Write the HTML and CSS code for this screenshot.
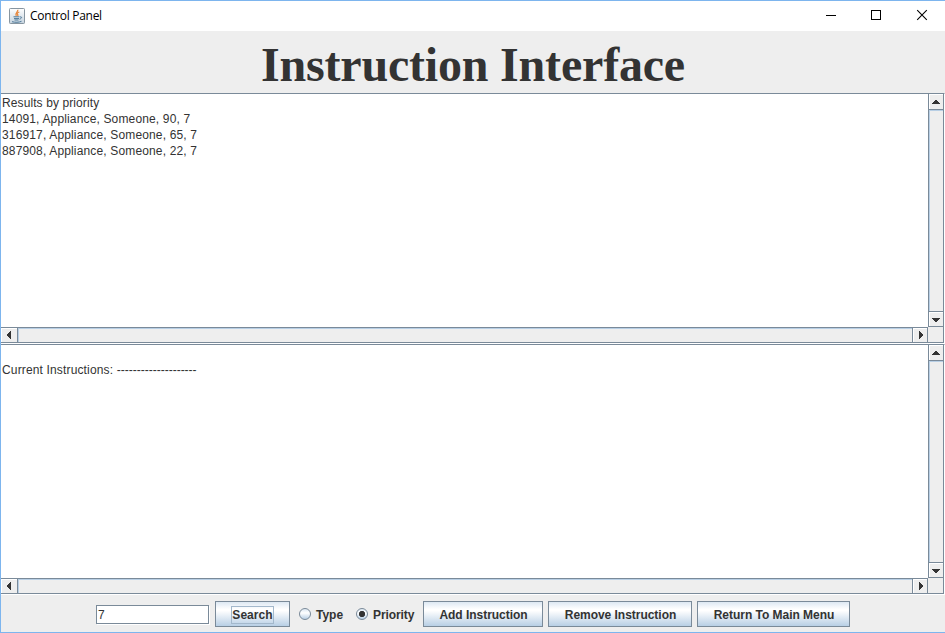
FILE: index.html
```html
<!DOCTYPE html>
<html lang="en">
<head>
<meta charset="utf-8">
<title>Control Panel</title>
<link rel="stylesheet" href="styles.css">
</head>
<body>
<div class="window">
  <header class="titlebar">
    <svg class="app-icon" width="16" height="16" viewBox="0 0 16 16">
      <defs><linearGradient id="tile" x2="0" y2="1"><stop offset="0" stop-color="#fff"/><stop offset="1" stop-color="#c5d3df"/></linearGradient></defs>
      <rect x=".5" y=".5" width="15" height="15" rx=".8" fill="url(#tile)" stroke="#8795a0"/>
      <path d="M8.700 1.800C9.700 4 5.200 4.700 7.300 8.200M10.300 4C7.500 5 8 6 8.800 6.800V8" fill="none" stroke="#e8883d" stroke-width="1.300"/>
      <path d="M4.500 8.800h6M5 10.600h5M5.500 12h4M3 13.700c3 .8 7 .8 9.500-.4M11 9c2-.7 2.400 1.300-.5 2.200" fill="none" stroke="#4e7898" stroke-width="1"/>
    </svg>
    <span class="caption">Control Panel</span>
    <svg class="controls" width="119" height="30" viewBox="0 0 119 30" fill="none" stroke="#000">
      <path d="M0 14.500h10M45.500 9.500h9v9h-9z" shape-rendering="crispEdges"/>
      <path d="M91.200 9.200l9.600 9.600M100.800 9.200l-9.600 9.600" stroke-width="1.100"/>
    </svg>
  </header>
  <h1 class="heading">Instruction Interface</h1>

  <section class="pane">
    <div class="view"><span class="title-line">Results by priority</span>
14091, Appliance, Someone, 90, 7
316917, Appliance, Someone, 65, 7
887908, Appliance, Someone, 22, 7</div>
    <div class="vbar">
      <div class="step"><svg width="8" height="4" viewBox="0 0 8 4"><path d="M3 0h2v1h1v1h1v1h1v1H0V3h1V2h1V1h1z"/></svg></div>
      <div class="track"></div>
      <div class="step"><svg width="8" height="4" viewBox="0 0 8 4"><path d="M0 0h8v1H7v1H6v1H5v1H3V3H2V2H1V1H0z"/></svg></div>
    </div>
    <div class="hbar">
      <div class="step"><svg width="4" height="8" viewBox="0 0 4 8"><path d="M4 0v8H3V7H2V6H1V5H0V3h1V2h1V1h1V0z"/></svg></div>
      <div class="track"></div>
      <div class="step"><svg width="4" height="8" viewBox="0 0 4 8"><path d="M0 0v8h1V7h1V6h1V5h1V3H3V2H2V1H1V0z"/></svg></div>
    </div>
    <div class="corner"></div>
  </section>

  <section class="pane">
    <div class="view"><br>Current Instructions: <span class="dashes">--------------------</span></div>
    <div class="vbar">
      <div class="step"><svg width="8" height="4" viewBox="0 0 8 4"><path d="M3 0h2v1h1v1h1v1h1v1H0V3h1V2h1V1h1z"/></svg></div>
      <div class="track"></div>
      <div class="step"><svg width="8" height="4" viewBox="0 0 8 4"><path d="M0 0h8v1H7v1H6v1H5v1H3V3H2V2H1V1H0z"/></svg></div>
    </div>
    <div class="hbar">
      <div class="step"><svg width="4" height="8" viewBox="0 0 4 8"><path d="M4 0v8H3V7H2V6H1V5H0V3h1V2h1V1h1V0z"/></svg></div>
      <div class="track"></div>
      <div class="step"><svg width="4" height="8" viewBox="0 0 4 8"><path d="M0 0v8h1V7h1V6h1V5h1V3H3V2H2V1H1V0z"/></svg></div>
    </div>
    <div class="corner"></div>
  </section>

  <footer class="toolbar">
    <div class="field">7</div>
    <button class="btn search"><span class="focus">Search</span></button>
    <div class="radio type"><i class="dot"></i><span>Type</span></div>
    <div class="radio priority"><i class="dot on"></i><span>Priority</span></div>
    <button class="btn add">Add Instruction</button>
    <button class="btn remove">Remove Instruction</button>
    <button class="btn return">Return To Main Menu</button>
  </footer>
</div>
</body>
</html>
```
FILE: styles.css
```css
* { box-sizing: border-box; }
body { margin: 0; overflow: hidden; font: 12px "Liberation Sans", Arial, sans-serif; color: #333; }
.window {
  width: 945px; height: 633px; background: #eee;
  border: 1px solid #7db5ee; border-right: 0;
  display: flex; flex-direction: column;
}
.titlebar { height: 30px; background: #fff; display: flex; align-items: center; padding-left: 8px; flex: none; }
.app-icon { margin-top: -1px; }
.caption { margin-left: 5px; font: 12px/16px "Open Sans", "Noto Sans", sans-serif; color: #000; letter-spacing: -.3px; }
.controls { margin-left: auto; }
.heading {
  margin: 0; height: 62px; flex: none; text-align: center; white-space: nowrap;
  font: bold 48px/68px "Liberation Serif", "Times New Roman", serif; letter-spacing: -.19px;
}
.pane {
  height: 251px; flex: none; display: grid;
  grid-template-columns: 927px 16px; grid-template-rows: 233px 16px;
  border-top: 1px solid #7a8a99; border-bottom: 1px solid #fff; border-right: 1px solid #fff;
}
.view { background: #fff; padding: 1px 0 0 1px; line-height: 16px; white-space: pre; letter-spacing: .15px; }
.title-line { letter-spacing: .1px; }
.dashes { letter-spacing: 0; }
.vbar { border: solid #7a8a99; border-width: 0 1px 1px; display: flex; flex-direction: column; }
.hbar { border: solid #7a8a99; border-width: 1px 1px 1px 0; display: flex; }
.corner { border: solid #7a8a99; border-width: 0 1px 1px 0; }
.step {
  flex: none; display: flex; align-items: center; justify-content: center;
  border: solid #fff; border-width: 1px 0 0 1px; fill: #333; shape-rendering: crispEdges;
}
.step svg { display: block; }
.vbar .step { height: 15px; padding: 0 2px 1px 0; }
.vbar .step:last-child { height: 14px; padding-bottom: 0; }
.hbar .step { width: 14px; padding: 0 0 1px; }
.hbar .step:first-child { width: 16px; padding-right: 2px; }
.track { flex: 1; border: solid #7a8a99; box-shadow: inset 1px 1px #b8cfe5; }
.vbar .track { border-width: 1px 0; }
.hbar .track { border-width: 0 1px; }
.toolbar { display: flex; align-items: center; height: 37px; padding-left: 95px; margin-top: 1px; }
.field {
  width: 113px; height: 19px; background: #fff; border: 1px solid #7a8a99;
  box-shadow: 1px 1px #fff; padding-left: 1px; line-height: 18px;
}
.btn {
  height: 26px; padding: 1px 0 0 1px; border: 1px solid #7a8a99; color: #333; letter-spacing: -.03px;
  font: bold 12px/24px "Liberation Sans", Arial, sans-serif; white-space: nowrap;
  background: linear-gradient(#dde8f3, #fff 30%, #fff 36%, #b8cfe5);
}
.search { width: 75px; margin-left: 6px; padding-left: 0; }
.focus { display: inline-block; height: 16px; line-height: 16px; outline: 1px solid #a3b8cc; letter-spacing: .05px; }
.radio { display: flex; align-items: center; font-weight: bold; margin-top: 1px; }
.type { width: 57px; margin-left: 9px; }
.priority { width: 67px; letter-spacing: -.1px; }
.dot {
  width: 12px; height: 12px; border: 1px solid #7a8a99; border-radius: 50%; margin: -2px 5px 0 0; flex: none;
  background: linear-gradient(#dde8f3, #fff 40%, #b8cfe5);
}
.dot.on { background: radial-gradient(circle, #333 2.8px, transparent 3.400px), linear-gradient(#dde8f3, #fff 40%, #b8cfe5); }
.add { width: 120px; }
.remove { width: 144px; margin-left: 5px; }
.return { width: 153px; margin-left: 5px; }
```
